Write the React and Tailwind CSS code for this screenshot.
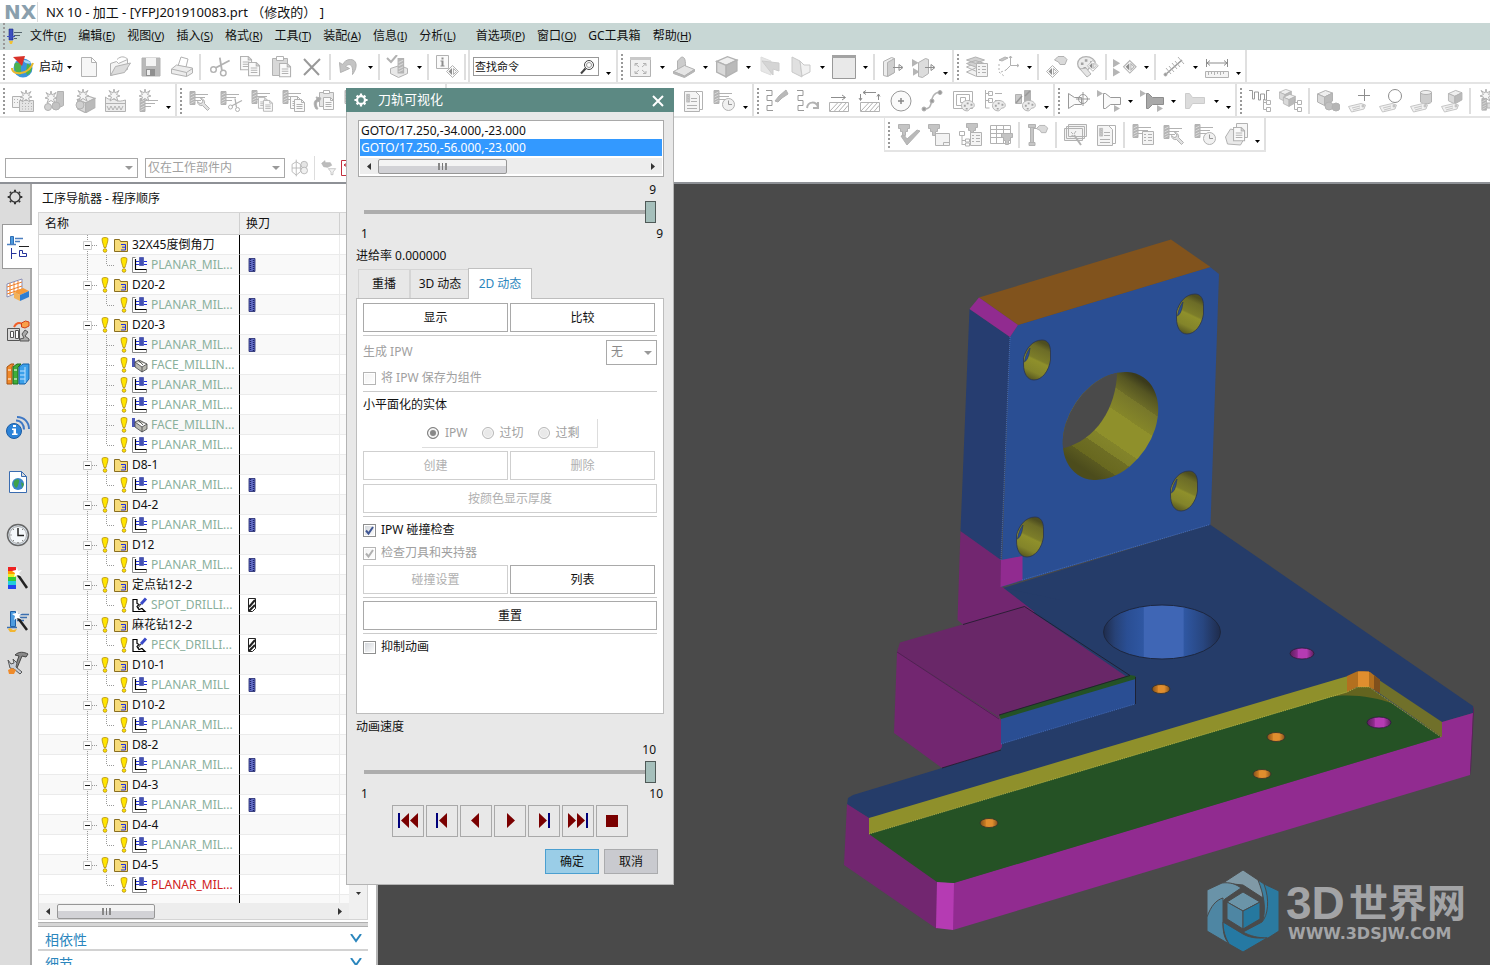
import { Fragment, useState } from 'react';

/* ---------- small icon parts, drawn from their own origin ---------- */

const at = (x, y, node, scale = 1) => (
  <g transform={`translate(${x} ${y}) scale(${scale})`}>{node}</g>
);

const mill = (
  <>
    <path fill="#b5b5b5" d="M1 .5h5v13H1z" />
    <path stroke="#d8d8d8" d="M1.500 4l4-2M1.500 7l4-2M1.500 10l4-2M1.500 12.500l4-2" />
  </>
);
const lines = <path fill="none" d="M0 .5h13M0 3.500h10M0 6.500h6" />;
const star = (
  <path fill="#f6f6f6" d="M6 0l1 4 4-2.500-2.500 4L12 7l-3.500 1L10 12 6 9.500 2 12l1.500-4L0 7l3.500-1.500L1 1.500 5 4z" />
);
const doc = (
  <>
    <path fill="#fafafa" d="M.5.5h7l3 3v9H.5z" />
    <path fill="none" d="M7.500.5v3h3M2.500 5.500h6M2.500 7.500h6M2.500 9.500h6" />
  </>
);
const list = (
  <>
    <path fill="#f4f4f4" d="M.5.5h11v13H.5z" />
    <path fill="none" d="M2 3.500h2M2 6.500h2M2 9.500h2M6 3.500h4M6 6.500h4M6 9.500h4" />
  </>
);
const palette = (
  <>
    <path fill="#ececec" d="M7 .5c4 0 7 2.500 7 5s-2 3-3.500 3S9 11.500 6.500 11.500C3 11.500.5 9 .5 6S3 .5 7 .5z" />
    <path fill="#a3a3a3" stroke="none" d="M3 5h2v2H3zM6 2.500h2v2H6zM10 4h2v2h-2zM5 8.500h2v1.500H5z" />
  </>
);
const clock = (
  <>
    <circle cx="6.500" cy="6.500" r="6" fill="#f1f1f1" />
    <path fill="none" stroke="#999" d="M6.500 2.500v4h3.500" />
  </>
);
const wrench = (
  <path d="M.5 3.500a4 4 0 0 0 5 4l5 5 2-2-5-5a4 4 0 0 0-4-5l2.500 2.500-1 2-2 .5z" />
);
const scissors = (
  <>
    <path fill="none" strokeWidth="1.300" d="M3.500 8L14 2.500M7 .5L8.500 9.500" />
    <circle cx="2.500" cy="9" r="2" fill="#fff" />
    <circle cx="9.500" cy="11.500" r="2" fill="#fff" />
  </>
);
const box = (
  <>
    <path fill="#efefef" d="M.5 4l8-3.500 7 2.500-8 4z" />
    <path fill="#d9d9d9" d="M.5 4l7 3v8.500l-7-3.500z" />
    <path fill="#bababa" d="M7.500 7l8-4v8l-8 4.500z" />
  </>
);
const tree = (
  <path fill="#fff" d="M1.500 0v10.500h3M1.500 3.500h3M4.500 1.500h4v4h-4zM4.500 8.500h4v4h-4z" />
);
const tag = (
  <>
    <path fill="#f1f1f1" stroke="#c6c6c6" d="M.5 6.500L13 3.500l4.500 1.500-1.500 4-12.500 3z" />
    <path fill="none" stroke="#c6c6c6" d="M4 8l8-2M5 10l7-2" />
    <circle cx="15" cy="6" r="1" fill="#fff" />
  </>
);
const holder = (
  <path fill="#c4c4c4" d="M.5.5h11v4h-2v3h-2v4h-3v-4h-2v-3h-2z" />
);
const diamond = (
  <>
    <path fill="#fafafa" d="M6.500.5l6 6-6 6-6-6z" />
    <path fill="#8d8d8d" stroke="none" d="M6 3v7L2.500 6.500z" />
    <path fill="none" d="M7.500 3.500v6l3-3z" />
  </>
);
const flagArrow = <path fill="#b5b5b5" stroke="none" d="M0 0l6 3.500L0 7z" />;
const hand = (
  <path fill="#dadada" d="M.5 4L4 .5h6l3 3-2 5H6L4.500 6z" />
);
const hatch = (
  <path fill="none" d="M.5.5h19v9H.5zM1 9l8-8.500M5 9.500l8-9M9.500 9.500l8-9M14 9.500l5-6" />
);
const cylinder = (
  <>
    <path fill="#cdcdcd" d="M.5 2v10c2 2.500 9 2.500 11 0V2z" />
    <ellipse cx="6" cy="2.500" rx="5.500" ry="2" fill="#eee" />
  </>
);
const snake = <path fill="none" stroke="#999" d="M1 1.500h6v5H2v5h5v5H2v5h6" />;

const ICONS = {
  newFile: <path fill="#f6f6f6" d="M4.500 2.500h10l5 5v14h-15zM14.500 2.500v5h5" />,
  open: (
    <>
      <path fill="#f5f5f5" d="M2.500 20.500V8.500l6-2 2 2 9-4v10z" />
      <path fill="#dcdcdc" d="M2.500 20.500l5-9L22.500 8l-6 9.500z" />
      <path fill="none" d="M9 4.500c4-4 8-3 11 0" />
    </>
  ),
  save: (
    <>
      <path fill="#b9b9b9" d="M3 3h18v18H3z" />
      <path fill="#f4f4f4" stroke="none" d="M7 3h10v8H7z" />
      <path fill="#8f8f8f" stroke="none" d="M7 14h9v7H7z" />
      <path fill="#eee" stroke="none" d="M8 15h3v5H8z" />
    </>
  ),
  print: (
    <>
      <path fill="#fff" d="M8 11l3-9 7 2-2 8z" />
      <path fill="#ececec" d="M1.500 14l5-4 16 3v5l-6 3.500-15-3z" />
      <path fill="none" d="M1.500 14l15 3.500 6-4M16.500 17.500v4" />
    </>
  ),
  cut: at(3, 2, scissors, 1.4),
  copy: (
    <>
      {at(2, 1, doc, 1.1)}
      {at(10, 7, doc, 1.1)}
    </>
  ),
  paste: (
    <>
      <path fill="#d8d8d8" d="M3.500 3.500h15v17h-15z" />
      <path fill="#fff" d="M7.500 1.500h7v4h-7z" />
      {at(10, 8, doc, 1.1)}
    </>
  ),
  remove: <path fill="none" strokeWidth="2" stroke="#999" d="M4 4l15 16M20 4L4 20" />,
  undo: <path fill="#c4c4c4" d="M2.500 7.500l1 10 9-4-4-2c4-4 8-2 7 8 6-8 4-15-2-15-4 0-6 2-8 5z" />,
  verify: (
    <>
      <path fill="none" strokeWidth="2" d="M1 3l4 4 6-7" />
      <path fill="#e8e8e8" d="M4.500 13.500l9-3 8 3v5l-9 4-8-4z" />
      {at(11, 3, mill, 1.1)}
    </>
  ),
  info: (
    <>
      <path fill="#fafafa" d="M1.500.5h12v13h-12z" />
      <path stroke="none" fill="#8d8d8d" d="M6.500 2.500h2v2h-2zM5.500 5.500h3v5h1v1h-4v-1h1v-4h-1z" />
      {at(11, 10, diamond)}
    </>
  ),
  fit: (
    <>
      <path fill="#f1f1f1" d="M1.500 3.500h20v18h-20z" />
      <path fill="#c9c9c9" stroke="none" d="M1 2h21v3H1z" />
      <path fill="none" d="M6 11V8.500h3M6 8.500l4 3.500M17 11V8.500h-3M17 8.500L13 12M6 16v2.500h3M6 18.500l4-3.500M17 16v2.500h-3M17 18.500L13 15" />
    </>
  ),
  section: (
    <>
      <path fill="#ccc" d="M5.500 17V6l4-4c3 0 4 2 4 9z" />
      <path fill="#e5e5e5" d="M1.500 16.500l11-6 10 4-10 6.500z" />
      <path fill="#b9b9b9" d="M1.500 16.500l11 4.500 10-6.500v2l-10 6-11-4z" />
    </>
  ),
  cube: at(1, 1, box, 1.35),
  plane: (
    <>
      <path fill="#e6e6e6" stroke="#ddd" d="M3 2l10 4v14L3 16z" />
      <path fill="#d5d5d5" stroke="#ccc" d="M4 6l17 2v8l-6-2v6z" />
    </>
  ),
  plane2: (
    <>
      <path fill="#e0e0e0" stroke="#c9c9c9" d="M3 2l8 4 2 16-10-5z" />
      <path fill="#f1f1f1" stroke="#c9c9c9" d="M11 6l4 4h6v7l-8 4z" />
    </>
  ),
  frame: (
    <>
      <path fill="#e9e9e9" stroke="#999" d="M.5.5h23v23H.5z" />
      <path fill="#a3a3a3" stroke="none" d="M0 0h24v3H0z" />
    </>
  ),
  exportBox: (
    <>
      <path fill="#ececec" d="M2.500 6.500l8-4 3 1v14l-7 4-4-1z" />
      <path fill="#cfcfcf" d="M6.500 7.500l7-4v14l-7 4z" />
      <path fill="none" stroke="#8d8d8d" d="M12 12.500h9M18 9.500l4 3-4 3z" />
    </>
  ),
  exportBox2: (
    <>
      {at(0, 4, flagArrow, 1.1)}
      {at(1, 13, flagArrow, 1.1)}
      <path fill="#dcdcdc" d="M6.500 7.500l7-4 3 1v14l-6 4-4-1z" />
      <path fill="none" stroke="#8d8d8d" d="M13 12.500h9M19 9.500l4 3-4 3z" />
    </>
  ),
  layers: (
    <>
      <path fill="#f1f1f1" d="M1.500 17l9-4 9 4-9 4zM1.500 12l9-4 9 4-9 4z" />
      <path fill="#d1d1d1" d="M1.500 5l9-3 9 3-9 3.500zM1.500 8.500l9-3 9 3-9 3.500z" />
      {at(11, 8, list)}
    </>
  ),
  csys: (
    <>
      <path fill="#c6c6c6" d="M3 5l6-3 3 1-6 3z" />
      <path fill="none" d="M14.500 1v9.500h8M14.500 10.500l-5 5M13 3l1.500-2L16 3M21 9l2 1.500-2 1.500" />
      <path fill="none" strokeDasharray="2 2" d="M3 9v8l5 4M5 17l5-2" />
    </>
  ),
  handDiamond: (
    <>
      {at(9, 1, hand)}
      {at(1, 10, diamond)}
    </>
  ),
  paletteDiamond: (
    <>
      {at(1, 1, palette, 1.3)}
      {at(11, 5, diamond, 0.9)}
      <path fill="#e5e5e5" d="M4 14l7 8 4-3-5-6z" />
    </>
  ),
  playDiamond: (
    <>
      {at(0, 4, flagArrow, 1.2)}
      {at(0, 13, flagArrow, 1.2)}
      {at(10, 5, diamond, 1.05)}
    </>
  ),
  measure: (
    <>
      <path fill="none" strokeWidth="1.500" stroke="#999" d="M3 20L20 5" />
      <path fill="none" d="M4 13l5 6M7 11l5 6M10 8l5 6M13 6l5 6M16 2l6 7" />
      <circle cx="3.500" cy="19.500" r="1.500" fill="#999" />
    </>
  ),
  ruler: (
    <>
      <path fill="none" stroke="#8d8d8d" d="M1.500 4v8M22.500 4v8M2 8h20M5 5.500L2 8l3 2.500M19 5.500L22 8l-3 2.500" />
      <path fill="#f4f4f4" d="M.5 16.500h23v6H.5z" />
      <path fill="none" d="M3.500 17v3M6.500 17v2M9.500 17v3M12.500 17v2M15.500 17v3M18.500 17v2" />
    </>
  ),
  newProgram: (
    <>
      <path fill="#f3f3f3" d="M1.500 7.500h14v11h-14z" />
      <path fill="#e4e4e4" d="M8.500 11.500h14v11h-14z" />
      <path fill="none" strokeDasharray="1 2" d="M3 10.500h10M3 13.500h5M11 14.500h10M11 17.500h10M11 20h10" />
      {at(9, 1, star)}
    </>
  ),
  newTool: (
    <>
      <path fill="#c4c4c4" d="M15.500 2.500h6v14l-4 2-4-3z" />
      <circle cx="6" cy="18" r="3.500" fill="#d2d2d2" />
      <circle cx="14" cy="17" r="4" fill="#c2c2c2" />
      {at(3, 2, star)}
    </>
  ),
  newGeom: (
    <>
      {at(4, 6, box, 1.15)}
      <circle cx="7" cy="16" r="4" fill="#cfcfcf" />
      {at(4, 0, star)}
    </>
  ),
  newMethod: (
    <>
      <path fill="#ececec" d="M1.500 8c4 4 7 1 10 3s6 1 10 0v11.500h-20z" />
      <path fill="none" d="M2 14.500h20M3 17l2 4 2-4 2 4 2-4 2 4 2-4 2 4 2-4" />
      {at(4, 0, star)}
    </>
  ),
  newOp: (
    <>
      {at(4, 9, mill)}
      {at(10, 11, lines)}
      {at(4, 0, star)}
    </>
  ),
  millWrench: (
    <>
      {at(1, 2, mill)}
      {at(7, 5, lines)}
      {at(9, 9, wrench)}
    </>
  ),
  millCut: (
    <>
      {at(1, 2, mill)}
      {at(7, 5, lines)}
      {at(9, 9, scissors)}
    </>
  ),
  millCopy: (
    <>
      {at(1, 1, mill)}
      {at(7, 4, lines)}
      {at(8, 8, doc, 0.9)}
      {at(13, 11, doc, 0.9)}
    </>
  ),
  millDoc: (
    <>
      {at(1, 1, mill)}
      {at(7, 4, lines)}
      {at(9, 7, doc)}
      {at(13, 10, doc)}
    </>
  ),
  millClip: (
    <>
      <path fill="#e5e5e5" d="M7.500 3.500h14v14h-14z" />
      <path fill="#fff" d="M11.500 1.500h6v3h-6z" />
      {at(11, 8, doc)}
      <path fill="#a9a9a9" d="M4 20c-3-5-2-8 1-10l-1-2 5 1-2 4-1-1c-2 2-2 4 0 8z" />
    </>
  ),
  millList: (
    <>
      {at(1, 1, mill)}
      {at(7, 4, lines)}
      {at(11, 8, list)}
    </>
  ),
  millClock: (
    <>
      {at(1, 1, mill)}
      {at(7, 4, lines)}
      {at(10, 9, clock)}
    </>
  ),
  docMill: (
    <>
      <path fill="#fff" d="M7.500 2.500h14v18h-14z" />
      <path fill="#f5f5f5" d="M3.500 2.500h11l4 4v16h-15z" />
      {at(5, 5, mill, 0.6)}
      <path fill="none" d="M10 9.500h6M10 12.500h6M6 16.500h10M6 19.500h10" />
    </>
  ),
  pathTorch: (
    <>
      {at(0, 0, snake)}
      <path fill="#b9b9b9" d="M10 12l4-5 7-6 2 4-6 4-4 4z" />
    </>
  ),
  pathRotate: (
    <>
      {at(0, 0, snake)}
      <path fill="none" strokeWidth="2" d="M11 19c1-7 9-7 11-1M22 13v6h-5" />
    </>
  ),
  hatchOver: (
    <>
      {at(2, 13, hatch)}
      <path fill="none" stroke="#8d8d8d" d="M4 8.500h14M15 6l3.500 2.500L15 11" />
    </>
  ),
  hatchCorner: (
    <>
      {at(2, 13, hatch)}
      <path fill="none" stroke="#8d8d8d" d="M2.500 5v6M1 9l1.500 2.500L4 9M20.500 11V5M19 7.500L20.500 5 22 7.500M5 3.500h13M8 1.500l-3 2 3 2" />
    </>
  ),
  target: (
    <>
      <circle cx="12" cy="12" r="10" fill="#fafafa" stroke="#999" />
      <path fill="none" stroke="#888" strokeWidth="1.500" d="M12 9v6M9 12h6" />
    </>
  ),
  curve: (
    <>
      <path fill="none" strokeWidth="1.500" d="M3 20c14 1 3-15 17-17" />
      <circle cx="4" cy="20" r="2" fill="#999" />
      <circle cx="12" cy="12" r="2" fill="#999" />
      <circle cx="20" cy="3.500" r="2" fill="#999" />
    </>
  ),
  contourPal: (
    <>
      <path fill="#fff" d="M2.500 2.500h19v17h-19zM5.500 5.500h13v11h-13zM9.500 8.500h5v5h-5z" />
      {at(10, 11, palette, 0.95)}
    </>
  ),
  treePal: (
    <>
      <path fill="#fff" d="M3.500 1v18h4M3.500 4.500h4M3.500 11.500h4M6.500 2.500h4v4h-4zM6.500 9.500h4v4h-4zM13 4.500h7M13 11.500h5" />
      {at(10, 11, palette, 0.95)}
    </>
  ),
  toolPal: (
    <>
      <path fill="#c9c9c9" d="M2.500 5.500h6v9h-6z" />
      <path fill="#b2b2b2" d="M11.500 1.500h6v13h-6z" />
      <path fill="none" stroke="#999" strokeWidth="1.500" d="M3 14l6-7M12 7l5-5" />
      {at(9, 11, palette, 0.95)}
    </>
  ),
  profTarget: (
    <>
      <path fill="#fafafa" stroke="#999" d="M2.500 4.500v15l6-4h7v-7h-7z" />
      <circle cx="17" cy="10" r="4.500" fill="none" stroke="#999" />
      <path fill="none" stroke="#999" d="M17 3v14M10 10h14" />
    </>
  ),
  prof: (
    <>
      {at(0, 1, flagArrow)}
      <path fill="#fafafa" stroke="#999" d="M6.500 4.500h2l5 4h10v7h-10l-5 4h-2z" />
      {at(17, 16, flagArrow)}
    </>
  ),
  profFilled: (
    <>
      {at(0, 1, flagArrow)}
      <path fill="#a9a9a9" stroke="#8d8d8d" d="M6.500 4.500h2l4 4h11v7h-11l-4 4h-2z" />
      {at(17, 16, flagArrow)}
    </>
  ),
  toolBody: <path fill="#dcdcdc" stroke="#ccc" d="M2.500 4.500h4l3 4h12v6h-12l-3 5h-4z" />,
  combTree: (
    <>
      <path fill="none" stroke="#999" d="M1 1.500h3.500V10h2V3h4v8h2V5h4v6h2V1.500h3" />
      {at(14, 10, tree)}
    </>
  ),
  cubeTree: (
    <>
      {at(0, 0, box, 0.8)}
      {at(4, 5, box, 0.8)}
      {at(14, 10, tree)}
    </>
  ),
  binocCube: (
    <>
      {at(1, 1, box)}
      <circle cx="13" cy="17" r="4" fill="#c0c0c0" />
      <circle cx="20" cy="18" r="4" fill="#b5b5b5" />
    </>
  ),
  tagPlus: (
    <>
      {at(1, 11, tag)}
      <path fill="none" stroke="#8d8d8d" d="M17.500 0v12M11 6.500h12" />
    </>
  ),
  tagCircle: (
    <>
      {at(1, 11, tag)}
      <circle cx="17" cy="7" r="6.500" fill="#fff" stroke="#8d8d8d" />
    </>
  ),
  tagCyl: (
    <>
      {at(11, 1, cylinder)}
      {at(1, 11, tag)}
    </>
  ),
  tagHolder: (
    <>
      {at(8, 1, box, 0.9)}
      {at(1, 11, tag)}
    </>
  ),
  starOp: (
    <>
      {at(3, 0, star)}
      {at(4, 9, mill, 0.9)}
      <path fill="#ddd" d="M10 14h10v5H10z" />
    </>
  ),
  holderCheck: (
    <>
      {at(2, 1, holder)}
      <path fill="#b9b9b9" d="M5 13l6 9L24 8l-3-1-10 9-3-4z" />
    </>
  ),
  holderDoc: (
    <>
      <path fill="#f3f3f3" d="M8.500 10.500h14v12h-14zM16.500 19.500h6M16.500 19.500v3" />
      {at(1, 1, holder)}
    </>
  ),
  holderTree: (
    <>
      <path fill="#fff" d="M1.500 8.500h5v4h-5zM4 13v9M4 17.500h3M4 21.500h3M7.500 16h4v3h-4zM7.500 20h4v3h-4z" />
      {at(8, 0, holder)}
      {at(12, 9, list)}
    </>
  ),
  gridHolder: (
    <>
      <path fill="#fff" d="M1.500 2.500h20v18h-20zM1.500 6.500h20M1.500 10.500h20M1.500 14.500h20M7.500 2.500v18M14.500 2.500v18" />
      {at(12, 10, holder)}
    </>
  ),
  flagHand: (
    <>
      <path fill="#c6c6c6" d="M4.500 4.500h3v15h-3zM2.500 1.500h7v3h-7zM3 22.500h6v-3H3z" />
      <path fill="none" d="M8 5.500h4" />
      {at(10, 2, hand, 0.9)}
    </>
  ),
  wand: (
    <>
      <path fill="#f3f3f3" d="M5.500 1.500h18v12h-18zM3.500 3.500h18v12h-18zM1.500 5.500h18v12h-18z" />
      <path fill="none" strokeWidth="2" d="M11 12l7 10" />
      <path fill="none" d="M8 9l2 2M13 8l-2 3M7 14l3-2" />
    </>
  ),
  clipStack: (
    <>
      <path fill="#e9e9e9" d="M1.500 14l5-8 4 1 10 8-4 7-13-1z" />
      <path fill="#f6f6f6" d="M12.500.5h11v14h-11z" />
      {at(9, 4, doc, 1.1)}
    </>
  ),
  geomLink: (
    <>
      <path fill="none" d="M2.500 7.500l5-3 5 3v9l-5 4-5-4zM7.500 2v20M2.500 12h10" />
      <circle cx="17" cy="8" r="4" fill="#e5e5e5" />
      <circle cx="17" cy="15" r="4" fill="#f0f0f0" />
    </>
  ),
  filterHand: (
    <>
      <path fill="#bcbcbc" d="M1 5l5-4v3h8l2 4-6 3-6-1z" />
      <path fill="#f3f3f3" d="M11 13h11l-4 5v4h-3v-4z" />
    </>
  ),
};

const Icon = ({ name, className = 'size-6' }) => (
  <svg viewBox="0 0 24 24" className={`shrink-0 ${className}`} fill="#e2e2e2" stroke="#b2b2b2" aria-hidden="true">
    {ICONS[name]}
  </svg>
);

const GlobeIcon = () => (
  <svg viewBox="0 0 24 24" className="size-6 shrink-0" aria-hidden="true">
    <circle cx="12" cy="13" r="9.500" fill="#3b93dc" />
    <path fill="#4db24a" d="M4 8c4-1 7 1 6 4s2 6-1 8c-5-3-7-8-5-12zM16 8l5 4c0 4-2 7-5 8-2-3 0-7 0-12z" />
    <path fill="#a8dcf5" d="M12 5c4 0 6 1 8 3-3 1-6 1-8-3z" />
    <path fill="none" stroke="#e9b92c" strokeWidth="2" d="M1 13c0 8 17 7 21-5" />
    <path fill="#d8322a" d="M2 2l12-1-3 10z" />
  </svg>
);

/* ---------- toolbars ---------- */

const TOOLBAR_1 = [
  ['newFile', 'open', 'save', 'print', '|', 'cut', 'copy', 'paste', 'remove', '|', 'undo', 'v', '|', 'verify', 'v', '|', 'info', '|'],
  ['fit', 'v', 'section', 'v', 'cube', 'v', 'plane', 'plane2', 'v', 'frame', 'v', '|', 'exportBox', 'exportBox2', 'end'],
  ['layers', 'csys', 'v', '|', 'handDiamond', 'paletteDiamond', '|', 'playDiamond', 'v', '|', 'measure', 'v', 'ruler', 'end'],
];

const TOOLBAR_2 = [
  ['newProgram', 'newTool', 'newGeom', 'newMethod', 'newOp', 'end'],
  ['millWrench', 'millCut', 'millCopy', 'millDoc', 'millClip', 'millList', 'millClock', 'docMill', 'end'],
  ['verify', 'millList', 'millDoc', 'millCopy', 'newOp', '|', 'curve', 'millList', 'docMill', 'millClock', 'end'],
  ['pathTorch', 'pathRotate', 'hatchOver', 'hatchCorner', 'target', 'curve', 'contourPal', 'treePal', 'toolPal', 'end'],
  ['profTarget', 'prof', 'v', 'profFilled', 'v', 'toolBody', 'v', 'end'],
  ['combTree', 'cubeTree', '|', 'binocCube', 'tagPlus', 'tagCircle', 'tagCyl', 'tagHolder', '|', 'starOp', 'newOp'],
];

const TOOLBAR_3 = [
  'holderCheck', 'holderDoc', 'holderTree', 'gridHolder', '|', 'flagHand', '|', 'wand', 'docMill', '|',
  'millList', 'millWrench', 'millClock', 'clipStack', 'end',
];

const Caret = ({ className = 'text-black' }) => (
  <svg viewBox="0 0 5 3" className={`h-[3px] w-[5px] shrink-0 ${className}`} aria-hidden="true">
    <path fill="currentColor" d="M0 0h5L2.500 3z" />
  </svg>
);

const Grip = () => <span className="mr-[2px] ml-[3px] h-[26px] shrink-0 border-l-2 border-dotted border-[#999]" />;

const ToolbarItem = ({ item }) => {
  if (item === '|') return <span className="mx-[2px] h-[26px] w-[2px] shrink-0 bg-[#dedede]" />;
  if (item === 'v') {
    return (
      <button type="button" aria-label="more" className="flex h-full w-3 shrink-0 items-center justify-center">
        <Caret />
      </button>
    );
  }
  if (item === 'end') {
    return (
      <button type="button" aria-label="options" className="flex h-full w-[13px] shrink-0 items-end justify-center pb-[7px]">
        <Caret />
      </button>
    );
  }
  return (
    <button type="button" aria-label={item} className="flex w-[31px] shrink-0 items-center justify-center">
      <Icon name={item} />
    </button>
  );
};

const Toolbar = ({ items, lead }) => (
  <div className="flex h-full shrink-0 items-center border-r-2 border-[#e0e0e0] pt-[2px]">
    <Grip />
    {lead}
    {items.map((item, i) => (
      <ToolbarItem key={i} item={item} />
    ))}
  </div>
);

const MENUS = [
  ['文件', 'F'],
  ['编辑', 'E'],
  ['视图', 'V'],
  ['插入', 'S'],
  ['格式', 'R'],
  ['工具', 'T'],
  ['装配', 'A'],
  ['信息', 'I'],
  ['分析', 'L'],
  ['首选项', 'P'],
  ['窗口', 'O'],
  ['GC工具箱', ''],
  ['帮助', 'H'],
];

const Combo = ({ label, value, width }) => (
  <span className={`relative flex ${width}`}>
    <select
      aria-label={label}
      disabled
      className="h-5 w-full appearance-none border border-[#a8a8a8] bg-white pl-[2px] text-[#a0a0a0] opacity-100"
    >
      <option>{value}</option>
    </select>
    <svg viewBox="0 0 8 4" className="pointer-events-none absolute top-2 right-[5px] h-1 w-2" aria-hidden="true">
      <path fill="#999" d="M0 0h8L4 4z" />
    </svg>
  </span>
);

const Header = () => (
  <header className="shrink-0">
    <div className="flex h-[23px] items-center overflow-hidden bg-white">
      <span className="w-[37px] pl-1 font-['DejaVu_Sans'] text-[20px] leading-[22px] font-bold text-[#8a9fad]">NX</span>
      <span className="h-5 border-l border-[#ddd]" />
      <h1 className="pl-2 text-[13px] leading-5 [text-spacing-trim:space-all]">NX 10 - 加工 - [YFPJ201910083.prt （修改的） ]</h1>
    </div>
    <nav className="flex h-[27px] items-center bg-[#c8d7d5] pb-[2px]">
      <Grip />
      <svg viewBox="0 0 16 16" className="mr-px size-4" aria-hidden="true">
        <path fill="#3d4fc0" stroke="#1b2880" strokeWidth=".6" d="M2 1h4v11H2z" />
        <path stroke="#56666e" d="M7 4.500h8M7 7.500h6M7 10.500h3" />
        <path stroke="#3d4fc0" d="M0 8.500h8" />
        <path fill="#f1c232" d="M2 13h4l-1 3H3z" />
      </svg>
      {MENUS.map(([label, key]) => (
        <button key={label} type="button" className={key === 'P' ? 'ml-2 px-[6px]' : 'px-[6px]'}>
          {label}
          {key && (
            <span className="text-[11px]">
              (<u>{key}</u>)
            </span>
          )}
        </button>
      ))}
    </nav>
    <div className="flex h-[34px] overflow-hidden border-b-2 border-[#e4e4e4] bg-white">
      <Toolbar
        items={TOOLBAR_1[0]}
        lead={
          <button type="button" className="flex w-[66px] items-center gap-1 pl-1">
            <GlobeIcon />
            启动
            <Caret />
          </button>
        }
      />
      <div className="flex items-center border-r-2 border-[#e0e0e0] bg-white pt-px pl-[3px]">
        <label className="flex h-[19px] w-[126px] items-center border border-[#999] bg-white pr-[3px] pl-px">
          <input aria-label="查找命令" defaultValue="查找命令" className="w-0 flex-1 text-[11px] leading-4 outline-none" />
          <svg viewBox="0 0 16 16" className="size-4" fill="none" stroke="#444" aria-hidden="true">
            <circle cx="10" cy="6" r="4.500" />
            <circle cx="10" cy="6" r="2.500" stroke="#999" />
            <path strokeWidth="2" d="M6.500 9.500L2 14.500" />
          </svg>
        </label>
        <span className="flex h-full pr-px pl-[3px]">
          <ToolbarItem item="end" />
        </span>
      </div>
      <Toolbar items={TOOLBAR_1[1]} />
      <Toolbar items={TOOLBAR_1[2]} />
    </div>
    <div className="flex h-[34px] overflow-hidden border-b-2 border-[#e4e4e4] bg-white">
      {TOOLBAR_2.map((items, i) => (
        <Toolbar key={i} items={items} />
      ))}
    </div>
    <div className="flex h-[34px] bg-white pl-[884px]">
      <div className="flex h-full border-b-2 border-l border-[#e4e4e4]">
        <Toolbar items={TOOLBAR_3} />
      </div>
    </div>
    <div className="flex h-8 items-center gap-[7px] border-b-2 border-[#8e9196] bg-white pt-[2px] pl-[5px]">
      <Combo label="类型过滤器" value="" width="w-[133px]" />
      <Combo label="选择范围" value="仅在工作部件内" width="w-[140px]" />
      <div className="-ml-[2px] flex items-center gap-1">
        <Icon name="geomLink" className="size-5" />
        <span className="h-6 border-l border-[#ddd]" />
        <Icon name="filterHand" className="ml-[2px] size-4" />
        <svg viewBox="0 0 16 16" className="size-4" fill="none" stroke="#c22f3d" aria-hidden="true">
          <path d="M.5.5h15v15H.5zM3 5h6M3 5l3-2M3 5l3 2" />
        </svg>
      </div>
    </div>
  </header>
);

/* ---------- resource bar ---------- */

const RAIL = [
  {
    name: '装配导航器',
    height: 'h-[42px]',
    art: (
      <>
        <path fill="#fff" stroke="#8b8fb5" d="M1 6l15-5v12L1 19z" />
        <path fill="none" stroke="#f07f2a" d="M4 5v12M8 4v12M12 3v11M1 9l15-5M1 13l15-5M1 16l15-5" />
        <path fill="#f59b3a" d="M8 14l9-4 6 3-9 4z" />
        <path fill="#2f7dd0" d="M14 17l9-4v6l-9 4z" />
        <path fill="#f3b25a" d="M8 14l6 3v6l-6-3z" />
      </>
    ),
  },
  {
    name: '机床导航器',
    height: 'h-[42px]',
    art: (
      <>
        <path fill="#d8d8d8" stroke="#555" d="M1.500 8.500h12v12h-12z" />
        <path fill="#fff" stroke="#555" d="M4.500 11.500h3v6h-3zM9.500 10.500h3v8h-3z" />
        <path fill="none" stroke="#f0602a" strokeWidth="2" d="M8 7c2-4 5-5 8-3" />
        <path fill="#f9a04a" stroke="#d2401a" d="M15.500 3l4-2 3.500 1v4l-4 2-3.500-1z" />
        <path fill="#aaa" stroke="#555" d="M14 21h9v-2l-4-3 3-4-3-2-3 4 2 4-4 1z" />
      </>
    ),
  },
  {
    name: '加工特征导航器',
    height: 'h-[42px]',
    art: (
      <>
        <path fill="#f08a2c" stroke="#a85210" d="M1 5l4-3h3L6 5v17H1z" />
        <path fill="#3fae3a" stroke="#1f6e1c" d="M7 5l4-3h4l-3 3v17H7z" />
        <path fill="#3aa0ea" stroke="#1560a8" d="M13 5l4-3h6v15l-4 5h-6z" />
        <path stroke="#fff" d="M2 8h3M2 17h3M8 8h3M8 17h3" />
        <path fill="none" stroke="#bfe2ff" d="M14 9h5M14 13h5M14 17h5M19 5v16" />
      </>
    ),
  },
  {
    name: 'HD3D 工具',
    height: 'h-[66px]',
    art: (
      <>
        <circle cx="8" cy="15" r="7.500" fill="#2c83d8" stroke="#1b5ca3" />
        <path fill="#fff" d="M7 9h3v2H7zM6 12.500h4v5h1.500V19H6v-1.500h1.500V14H6z" />
        <path fill="none" stroke="#3f78c4" strokeWidth="2" d="M10 4.500c5 0 8 4 8 9M11 1c7 0 12 5 12 12" />
      </>
    ),
  },
  {
    name: 'Internet Explorer',
    height: 'h-[42px]',
    art: (
      <>
        <path fill="#fff" stroke="#3a6cb0" d="M3.500 1.500h12l5 5v16h-17zM15.500 1.500v5h5" />
        <circle cx="12" cy="14" r="6" fill="#3b86c9" />
        <path fill="#3fa14a" d="M8 11c3-3 6-2 5 1s-1 5-3 6c-2-2-3-4-2-7zM15 12l3 2-2 4z" />
      </>
    ),
  },
  {
    name: '历史记录',
    height: 'h-[64px]',
    art: (
      <>
        <circle cx="12" cy="12" r="10.500" fill="#dbe6f0" stroke="#666" strokeWidth="1.500" />
        <circle cx="12" cy="12" r="8.500" fill="#f4f8fb" stroke="#aaa" />
        <path fill="none" stroke="#222" strokeWidth="1.500" d="M12 5v7.500h6" />
        <path stroke="#555" d="M12 19v1M4.500 12h1M7 6l.7.7M7 18l.7-.7M17 18l-.7-.7M17 6l-.7.7" />
      </>
    ),
  },
  {
    name: '系统材料',
    height: 'h-[22px]',
    art: (
      <>
        <path fill="#e22" d="M2 1h8v4H2z" />
        <path fill="#f90" d="M2 5h8v3H2z" />
        <path fill="#ee2" d="M2 8h8v3H2z" />
        <path fill="#3c3" d="M2 11h8v4H2z" />
        <path fill="#2cd" d="M2 15h8v4H2z" />
        <path fill="#24e" d="M2 19h8v4H2z" />
        <path fill="none" stroke="#222" strokeWidth="2.500" d="M12 9l9 13" />
        <path fill="#fff" d="M11 1l1 4 4-1-3 3 2 3-4-1-3 2 1-4-3-2 4-1z" />
      </>
    ),
  },
  {
    name: '加工向导',
    height: 'h-[64px]',
    art: (
      <>
        <path fill="#4d9bdf" stroke="#1f5fa5" d="M4.500 2.500h5v15h-5z" />
        <path stroke="#3b6fb0" strokeWidth="1.500" d="M11 5.500h12M11 8.500h10M11 11.500h7M1 18.500h10" />
        <path fill="#f2b632" d="M2 20l2-1 3 2 4-1-2 3H4z" />
        <path fill="none" stroke="#222" strokeWidth="2.500" d="M12 9l9 12" />
        <path fill="#fff" d="M11 1l1 4 4-1-3 3 2 3-4-1-3 2 1-4-3-2 4-1z" />
      </>
    ),
  },
  {
    name: '工具',
    height: 'h-[20px]',
    art: (
      <>
        <path fill="#888" stroke="#444" d="M9 4c4-4 9-3 13-1l-2 3-4-1-5 12-2-1 4-11z" />
        <path fill="#c7cdd6" stroke="#555" d="M2 9l3 4 3-1-1-4 4 4-1 4 6 5-2 2-6-5-4-1z" />
        <path fill="#ef8b2b" d="M2 19l4-2 4 2-2 4H3z" />
      </>
    ),
  },
];

const ResourceBar = () => (
  <aside className="flex w-8 shrink-0 flex-col border-r-2 border-[#aaa] bg-[#dcdcdc]">
    <button type="button" aria-label="资源条选项" className="flex h-[40px] items-start justify-center pt-1">
      <svg viewBox="0 0 16 16" className="size-[18px]" fill="none" stroke="#333" aria-hidden="true">
        <circle cx="8" cy="8" r="4.500" strokeWidth="1.200" />
        <path strokeWidth="1.800" d="M8 1.500v2M8 12.500v2M1.500 8h2M12.500 8h2M3.500 3.500l1 1M11.500 11.500l1 1M3.500 12.500l1-1M11.500 4.500l1-1" />
      </svg>
    </button>
    <button
      type="button"
      aria-label="工序导航器"
      className="-mr-[2px] ml-[2px] flex h-[45px] shrink-0 items-center justify-center border border-r-0 border-[#999] bg-white"
    >
      <svg viewBox="0 0 24 24" className="size-6" fill="none" aria-hidden="true">
        <path fill="#4d9bdf" stroke="#2f6fb5" d="M4.500 1.500h3v8h-3z" />
        <path stroke="#4d7fc0" strokeWidth="1.300" d="M1 9.500h9M9 3.500h8M9 6.500h5" />
        <path stroke="#222" d="M13 11.500h10" />
        <path stroke="#25339b" d="M5.500 13v11M5.500 18.500h5M13.500 15.500h3v3h4v3h-7z" />
      </svg>
    </button>
    {RAIL.map(({ name, height, art }) => (
      <button key={name} type="button" aria-label={name} className={`flex shrink-0 items-center justify-center pl-[5px] ${height}`}>
        <svg viewBox="0 0 24 24" className="size-6 shrink-0" aria-hidden="true">
          {art}
        </svg>
      </button>
    ))}
  </aside>
);

/* ---------- operation navigator ---------- */

const TREE = [
  { name: '32X45度倒角刀', ops: [['PLANAR_MIL...', 'mill']] },
  { name: 'D20-2', ops: [['PLANAR_MIL...', 'mill']] },
  {
    name: 'D20-3',
    ops: [
      ['PLANAR_MIL...', 'mill'],
      ['FACE_MILLIN...'],
      ['PLANAR_MIL...'],
      ['PLANAR_MIL...'],
      ['FACE_MILLIN...'],
      ['PLANAR_MIL...'],
    ],
  },
  { name: 'D8-1', ops: [['PLANAR_MIL...', 'mill']] },
  { name: 'D4-2', ops: [['PLANAR_MIL...', 'mill']] },
  { name: 'D12', ops: [['PLANAR_MIL...', 'mill']] },
  { name: '定点钻12-2', ops: [['SPOT_DRILLI...', 'drill']] },
  { name: '麻花钻12-2', ops: [['PECK_DRILLI...', 'drill']] },
  { name: 'D10-1', ops: [['PLANAR_MILL', 'mill']] },
  { name: 'D10-2', ops: [['PLANAR_MIL...']] },
  { name: 'D8-2', ops: [['PLANAR_MIL...', 'mill']] },
  { name: 'D4-3', ops: [['PLANAR_MIL...', 'mill']] },
  { name: 'D4-4', ops: [['PLANAR_MIL...']] },
  { name: 'D4-5', ops: [['PLANAR_MIL...', null, true]] },
];

const bang = (x) => (
  <g transform={`translate(${x} 2)`}>
    <path fill="#ffe400" stroke="#b08d10" strokeWidth=".8" d="M1 1.500C2 .2 6 .2 7 1.500 7 5 5.500 8 5 10.500H3C2.500 8 1 5 1 1.500z" />
    <circle cx="4" cy="13.500" r="1.800" fill="#ffe400" stroke="#b08d10" strokeWidth=".8" />
  </g>
);

const opArt = (name) => {
  if (name.startsWith('FACE')) {
    return (
      <>
        <path fill="#4b57b8" d="M0 1h3v9H0z" />
        <path fill="#b9b9b2" stroke="#444" strokeWidth=".8" d="M3 5l4-2 8 4v5l-5 3-7-5zM3 5l7 5 5-3M10 10v5M6 3l5 5" />
      </>
    );
  }
  if (name.includes('DRILL')) {
    return (
      <>
        <path fill="#fff" stroke="#000" strokeWidth="1.200" d="M5 2.500H1v12h12l-3-3-3 1-2-3 2-2-2-1z" />
        <path stroke="#3a4ac8" strokeWidth="3" d="M14 1.500L9 7" />
        <path stroke="#222" d="M9 7l-3 4" />
      </>
    );
  }
  return (
    <>
      <path fill="#fff" stroke="#888" d="M3.500.5h-3v15h14v-3" />
      <path fill="none" stroke="#000" strokeWidth="1.200" d="M3.500 2v10.500h11" />
      <path fill="#4450b4" stroke="#2b3a9e" strokeWidth=".6" d="M7.500.5h4v8h-4z" />
      <path stroke="#2030e0" d="M4 4.500h3M12 4.500h3M4 7.500h3M12 7.500h3" />
    </>
  );
};

const FolderGuide = ({ last }) => (
  <svg viewBox="0 0 93 20" className="h-5 w-[93px] shrink-0" fill="none" aria-hidden="true">
    <path stroke="#999" strokeDasharray="1 1" d={`M48.500 0v${last ? 10 : 20}M53 10.500h5`} />
    <path fill="#fff" stroke="#ccc" d="M44.500 6.500h8v8h-8z" />
    <path stroke="#222" d="M46 10.500h5" />
    {bang(62)}
    <path fill="#f7dc7a" stroke="#8a6f20" d="M75.500 4.500h5l1 2h7v10h-13z" />
    <path stroke="#2030e0" d="M82 9.500h4.500v5.500H82M83 12.200h3" />
  </svg>
);

const OpGuide = ({ name, lastChild, lastGroup }) => (
  <svg viewBox="0 0 112 20" className="h-5 w-[112px] shrink-0" fill="none" aria-hidden="true">
    <path
      stroke="#999"
      strokeDasharray="1 1"
      d={`${lastGroup ? '' : 'M48.500 0v20'}M67.500 0v${lastChild ? 10 : 20}M68 10.500h8`}
    />
    {bang(81)}
    <g transform="translate(93 2)">{opArt(name)}</g>
  </svg>
);

const ToolChange = ({ kind }) => (
  <svg viewBox="0 0 8 14" className="ml-2 h-[14px] w-2" aria-hidden="true">
    {kind === 'mill' ? (
      <>
        <path fill="#6670c8" stroke="#20266a" strokeWidth=".8" d="M1 .5h6v13H1z" />
        <path stroke="#1c2268" strokeWidth="1.500" strokeDasharray="1 1" d="M2.500 1v12M5.500 2v11" />
      </>
    ) : (
      <>
        <path fill="#fff" stroke="#222" d="M.5.5h7v10l-3 3h-4z" />
        <path stroke="#222" strokeWidth="2" d="M1 9l6-7M1 13l6-6" />
      </>
    )}
  </svg>
);

const ScrollBar = ({ thumb }) => (
  <div className="flex h-4 items-center bg-[#ededed]">
    <button type="button" aria-label="向左滚动" className="flex w-[18px] justify-center">
      <svg viewBox="0 0 4 7" className="h-[7px] w-1" aria-hidden="true">
        <path d="M4 0v7L0 3.500z" fill="#333" />
      </svg>
    </button>
    <span
      className={`flex h-[15px] items-center justify-center gap-[2px] rounded-xs border border-[#979797] bg-linear-to-b from-[#f4f4f4] from-50% to-[#d2d2d6] to-50% ${thumb}`}
    >
      <span className="h-[7px] w-[2px] bg-[#888]" />
      <span className="h-[7px] w-px bg-[#777]" />
      <span className="h-[7px] w-[2px] bg-[#888]" />
    </span>
    <button type="button" aria-label="向右滚动" className="ml-auto flex w-[18px] justify-center">
      <svg viewBox="0 0 4 7" className="h-[7px] w-1" aria-hidden="true">
        <path d="M0 0v7l4-3.500z" fill="#333" />
      </svg>
    </button>
  </div>
);

const SectionHead = ({ title }) => (
  <button
    type="button"
    className="flex h-6 w-full shrink-0 items-center justify-between border-b-2 border-[#d2d2d2] pt-1 pr-[6px] pl-[7px] text-sm leading-[18px] text-[#2b86bd]"
  >
    {title}
    <svg viewBox="0 0 12 9" className="mb-1 h-[9px] w-3" fill="none" stroke="#2b86bd" strokeWidth="2" aria-hidden="true">
      <path d="M1 0l5 7 5-7" />
    </svg>
  </button>
);

const Navigator = () => (
  <section className="flex w-[346px] shrink-0 flex-col border-r-2 border-[#b5b5b5] bg-white pr-2 pl-[6px]">
    <h2 className="h-7 shrink-0 pt-px pl-1 leading-7">工序导航器 - 程序顺序</h2>
    <div className="flex shrink-0 border border-[#d5d5d5]">
      <div className="min-w-0 flex-1">
        <table className="w-full table-fixed border-separate border-spacing-0">
          <thead>
            <tr className="bg-[#efefef] text-left leading-5">
              <th className="h-[22px] w-[201px] border-r border-b border-[#d0d0d0] p-0 pl-[6px] font-normal">名称</th>
              <th className="w-[100px] border-r border-b border-[#d0d0d0] p-0 pl-[6px] font-normal">换刀</th>
              <th className="border-b border-[#d0d0d0] p-0" />
            </tr>
          </thead>
          <tbody>
            {TREE.map((group, g) => (
              <Fragment key={group.name}>
                <tr className="even:bg-[#f9f9f9]">
                  <td className="h-5 border-r border-b border-r-black border-b-[#ebebeb] p-0">
                    <div className="-mb-px flex items-center leading-5">
                      <FolderGuide last={g === TREE.length - 1} />
                      {group.name}
                    </div>
                  </td>
                  <td className="border-r border-b border-[#ebebeb] p-0" />
                  <td className="border-b border-[#ebebeb] p-0" />
                </tr>
                {group.ops.map(([name, tool, current], i) => (
                  <tr key={i} className="even:bg-[#f9f9f9]">
                    <td className="h-5 border-r border-b border-r-black border-b-[#ebebeb] p-0">
                      <div
                        className={`-mb-px flex items-center leading-5 whitespace-nowrap ${current ? 'text-[#cf2020]' : 'text-[#8ab09c]'}`}
                      >
                        <OpGuide name={name} lastChild={i === group.ops.length - 1} lastGroup={g === TREE.length - 1} />
                        {name}
                      </div>
                    </td>
                    <td className="border-r border-b border-[#ebebeb] p-0">{tool && <ToolChange kind={tool} />}</td>
                    <td className="border-b border-[#ebebeb] p-0" />
                  </tr>
                ))}
              </Fragment>
            ))}
            <tr className="bg-[#f9f9f9]">
              <td className="h-2 border-r border-black p-0" />
              <td className="border-r border-[#ebebeb] p-0" />
              <td className="p-0" />
            </tr>
          </tbody>
        </table>
        <ScrollBar thumb="w-[98px]" />
      </div>
      <div className="flex w-[18px] flex-col justify-end bg-[#f0f0f0] pb-6">
        <span className="flex justify-center">
          <Caret className="text-[#333]" />
        </span>
      </div>
    </div>
    <div className="mt-[2px] h-[5px] shrink-0 border-y border-[#b0b0b0] bg-[#d6d6d6]" />
    <SectionHead title="相依性" />
    <SectionHead title="细节" />
  </section>
);

/* ---------- tool path dialog ---------- */

const Check = ({ label, checked, disabled }) => (
  <label className={`flex items-center gap-[5px] leading-5 ${disabled ? 'text-[#a0a0a0]' : ''}`}>
    <span className="relative flex">
      <input
        type="checkbox"
        defaultChecked={checked}
        disabled={disabled}
        className="peer size-[13px] appearance-none border border-[#8e8f8f] bg-linear-to-br from-[#cfd3d8] to-white shadow-[inset_0_0_0_1px_#fff] disabled:border-[#b5b5b5] disabled:from-[#f3f3f3]"
      />
      <svg
        viewBox="0 0 13 13"
        className="pointer-events-none absolute inset-0 hidden size-[13px] peer-checked:block"
        fill="none"
        stroke={disabled ? '#b0b0b0' : '#3f5693'}
        strokeWidth="2"
        aria-hidden="true"
      >
        <path d="M3 6.500L5.500 9.500 10 3" />
      </svg>
    </span>
    {label}
  </label>
);

const Radio = ({ label, checked }) => (
  <label className="flex items-center gap-[6px] leading-5 text-[#a0a0a0]">
    <input
      type="radio"
      name="facet"
      disabled
      defaultChecked={checked}
      className="size-3 appearance-none rounded-full border border-[#b8b8b8] bg-[#e9e9e9] shadow-[inset_0_0_0_1px_#f8f8f8] checked:border-[#808080] checked:bg-[#888] checked:shadow-[inset_0_0_0_2px_#f4f4f4]"
    />
    {label}
  </label>
);

const FlatButton = ({ children, disabled, wide }) => (
  <button
    type="button"
    disabled={disabled}
    className={`h-[29px] border border-[#a9a9a9] bg-white disabled:border-[#cfcfcf] disabled:text-[#b0b0b0] ${wide ? 'w-full' : 'w-[145px]'}`}
  >
    {children}
  </button>
);

const Rule = () => <hr className="my-[3px] border-t border-[#cbcbcb]" />;

const Slider = ({ label, max }) => {
  const [value, setValue] = useState(max);
  return (
    <div className="pr-px pl-2">
      <output className="mr-[7px] flex h-5 items-center justify-end">{value}</output>
      <input
        type="range"
        aria-label={label}
        min="1"
        max={max}
        value={value}
        onChange={(e) => setValue(e.target.value)}
        className="block h-6 w-[292px] appearance-none bg-transparent [&::-webkit-slider-runnable-track]:h-[22px] [&::-webkit-slider-runnable-track]:bg-[linear-gradient(transparent_9px,#adadad_9px,#adadad_13px,transparent_13px)] [&::-webkit-slider-thumb]:h-[22px] [&::-webkit-slider-thumb]:w-[11px] [&::-webkit-slider-thumb]:appearance-none [&::-webkit-slider-thumb]:border [&::-webkit-slider-thumb]:border-[#4f5957] [&::-webkit-slider-thumb]:bg-[#a5bfbb]"
      />
      <div className="-ml-[3px] flex h-5 items-center justify-between">
        <span>1</span>
        <span>{max}</span>
      </div>
    </div>
  );
};

const PLAYBACK = [
  ['回到起点', <><path fill="#00007a" d="M6 8h2v15H6z" /><path fill="#7a0000" d="M17 8v15l-8-7.500zM26 8v15l-8-7.500z" /></>],
  ['上一个操作', <><path fill="#00007a" d="M10 8h2v15h-2z" /><path fill="#7a0000" d="M21 8v15l-8-7.500z" /></>],
  ['反向播放', <path fill="#7a0000" d="M19 8v15l-8-7.500z" />],
  ['播放', <path fill="#7a0000" d="M13 8v15l8-7.500z" />],
  ['下一个操作', <><path fill="#7a0000" d="M11 8v15l8-7.500z" /><path fill="#00007a" d="M20 8h2v15h-2z" /></>],
  ['到终点', <><path fill="#7a0000" d="M6 8v15l8-7.500zM15 8v15l8-7.500z" /><path fill="#00007a" d="M24 8h2v15h-2z" /></>],
  ['停止', <path fill="#7a0000" d="M10 10h12v12H10z" />],
];

const TABS = [
  ['重播', 'w-[52px]'],
  ['3D 动态', 'w-[60px]'],
  ['2D 动态', 'w-[64px]'],
];

const Dialog = () => {
  const [tab, setTab] = useState('2D 动态');

  return (
    <div
      role="dialog"
      aria-label="刀轨可视化"
      className="absolute top-[88px] left-[346px] w-[328px] border border-t-0 border-[#b4b4b4] bg-[#e8e8e8]"
    >
      <div className="-mx-px flex h-6 items-center bg-[#5c8983] pr-[10px] pl-2 text-white">
        <svg viewBox="0 0 16 16" className="size-[14px]" fill="none" stroke="#fff" aria-hidden="true">
          <circle cx="8" cy="8" r="4.500" strokeWidth="2.500" />
          <path strokeWidth="2.500" d="M8 .5v3M8 12.500v3M.5 8h3M12.500 8h3M3 3l1.500 1.500M11.500 11.500L13 13M3 13l1.500-1.500M11.500 4.500L13 3" />
        </svg>
        <span className="ml-[10px] text-[13px]">刀轨可视化</span>
        <button type="button" aria-label="关闭" className="mt-[2px] ml-auto">
          <svg viewBox="0 0 12 12" className="size-3" stroke="#fff" strokeWidth="2" aria-hidden="true">
            <path d="M1 1l10 10M11 1L1 11" />
          </svg>
        </button>
      </div>

      <div className="pt-2 pr-[9px] pb-[10px] pl-[9px]">
        <div className="ml-[2px] border border-[#a9a9a9] bg-white p-px leading-[17px]">
          <ul>
            <li className="px-px">GOTO/17.250,-34.000,-23.000</li>
            <li className="bg-[#3399ff] px-px text-white">GOTO/17.250,-56.000,-23.000</li>
          </ul>
          <div className="pt-[2px] pb-px">
            <ScrollBar thumb="w-[129px]" />
          </div>
        </div>

        <div className="pt-[3px]">
          <Slider label="刀轨位置" max={9} />
        </div>
        <p className="pt-[2px] leading-5">进给率 0.000000</p>

        <div role="tablist" className="mt-[2px] ml-[2px] flex items-end">
          {TABS.map(([name, width]) => (
            <button
              key={name}
              type="button"
              role="tab"
              aria-selected={tab === name}
              onClick={() => setTab(name)}
              className={`border border-b-0 ${width} ${
                tab === name
                  ? 'relative -mb-px -ml-[2px] h-[31px] border-[#c0c0c0] bg-white text-[#2b86bd]'
                  : 'h-[29px] border-[#d5d5d5]'
              }`}
            >
              {name}
            </button>
          ))}
        </div>

        <div className="h-[416px] border border-[#bdbdbd] bg-white px-[6px] pt-1">
          <div className="flex gap-[2px]">
            <FlatButton>显示</FlatButton>
            <FlatButton>比较</FlatButton>
          </div>
          <Rule />
          <div className="flex h-[26px] items-center justify-between text-[#a0a0a0]">
            <label htmlFor="ipw">生成 IPW</label>
            <span className="relative flex">
              <select
                id="ipw"
                disabled
                className="h-[25px] w-[51px] appearance-none border border-[#a9a9a9] bg-white pl-1 text-[#8a8a8a] opacity-100"
              >
                <option>无</option>
              </select>
              <svg viewBox="0 0 8 4" className="pointer-events-none absolute top-[11px] right-[5px] h-1 w-2" aria-hidden="true">
                <path fill="#999" d="M0 0h8L4 4z" />
              </svg>
            </span>
          </div>
          <div className="pt-[3px]">
            <Check label="将 IPW 保存为组件" disabled />
          </div>
          <Rule />
          <p className="leading-5">小平面化的实体</p>
          <div className="mt-1 ml-[59px] flex h-[29px] w-[176px] items-center gap-[14px] border-r border-b border-[#ddd] pl-[5px]">
            <Radio label="IPW" checked />
            <Radio label="过切" />
            <Radio label="过剩" />
          </div>
          <div className="mt-[3px] flex gap-[2px]">
            <FlatButton disabled>创建</FlatButton>
            <FlatButton disabled>删除</FlatButton>
          </div>
          <div className="mt-1 flex">
            <FlatButton disabled wide>
              按颜色显示厚度
            </FlatButton>
          </div>
          <Rule />
          <div className="flex flex-col gap-[3px]">
            <Check label="IPW 碰撞检查" checked />
            <Check label="检查刀具和夹持器" checked disabled />
          </div>
          <div className="mt-[2px] flex gap-[2px]">
            <FlatButton disabled>碰撞设置</FlatButton>
            <FlatButton>列表</FlatButton>
          </div>
          <Rule />
          <div className="flex">
            <FlatButton wide>重置</FlatButton>
          </div>
          <Rule />
          <Check label="抑制动画" />
        </div>

        <p className="pt-[3px] leading-5">动画速度</p>
        <div className="pt-[3px]">
          <Slider label="动画速度" max={10} />
        </div>
        <div className="mt-px flex justify-center gap-[2px]">
          {PLAYBACK.map(([name, art]) => (
            <button key={name} type="button" aria-label={name} className="size-8 border border-[#a9a9a9]">
              <svg viewBox="1 1 30 30" className="size-[30px]" aria-hidden="true">
                {art}
              </svg>
            </button>
          ))}
        </div>
        <div className="mt-3 flex justify-end gap-[5px] pr-[6px]">
          <button type="button" className="h-[25px] w-[54px] border border-[#4b9fd0] bg-[#9acde7]">
            确定
          </button>
          <button type="button" className="h-[25px] w-[54px] border border-[#aaabad] bg-[#c9cacf]">
            取消
          </button>
        </div>
      </div>
    </div>
  );
};

/* ---------- graphics window ---------- */

const BOLT_HOLES = [
  [1190, 314],
  [1037, 360],
  [1184, 491],
  [1030, 537],
];
const PIN_HOLES = [
  [1161, 689],
  [1276, 737],
  [1262, 774],
  [989, 823],
];

const Viewport = () => (
  <main className="min-w-0 flex-1 bg-[#4a4a4a]">
    <svg viewBox="378 184 1112 781" preserveAspectRatio="xMaxYMid meet" className="block size-full">
      <defs>
        <linearGradient id="bore" gradientUnits="userSpaceOnUse" x1="1082" y1="468" x2="1142" y2="380">
          <stop offset="0" stopColor="#4c4c1c" />
          <stop offset=".12" stopColor="#5a5a20" />
          <stop offset=".12" stopColor="#68681f" />
          <stop offset=".26" stopColor="#6e6e24" />
          <stop offset=".26" stopColor="#7f8028" />
          <stop offset=".36" stopColor="#83842a" />
          <stop offset=".36" stopColor="#8f902b" />
          <stop offset=".62" stopColor="#8f902b" />
          <stop offset=".62" stopColor="#858629" />
          <stop offset=".8" stopColor="#77772a" />
          <stop offset=".8" stopColor="#6c6c27" />
          <stop offset=".92" stopColor="#555522" />
          <stop offset="1" stopColor="#3a3a1c" />
        </linearGradient>
        <linearGradient id="bolt" gradientUnits="userSpaceOnUse" x1="-8" y1="18" x2="8" y2="-16">
          <stop offset="0" stopColor="#5a5a20" />
          <stop offset=".2" stopColor="#83842a" />
          <stop offset=".5" stopColor="#8f902b" />
          <stop offset=".55" stopColor="#7c7d29" />
          <stop offset=".85" stopColor="#6c6c27" />
          <stop offset="1" stopColor="#4e4e20" />
        </linearGradient>
        <linearGradient id="well">
          <stop offset="0" stopColor="#1f2c4c" />
          <stop offset=".1" stopColor="#274277" />
          <stop offset=".2" stopColor="#2a4e93" />
          <stop offset=".34" stopColor="#2f57a2" />
          <stop offset=".35" stopColor="#3f66b5" />
          <stop offset=".68" stopColor="#3f66b5" />
          <stop offset=".69" stopColor="#2f57a2" />
          <stop offset=".85" stopColor="#284680" />
          <stop offset="1" stopColor="#1f2c4c" />
        </linearGradient>
        <linearGradient id="pin">
          <stop offset="0" stopColor="#80501c" />
          <stop offset=".3" stopColor="#c87a22" />
          <stop offset=".35" stopColor="#e08e2e" />
          <stop offset=".68" stopColor="#e08e2e" />
          <stop offset="1" stopColor="#80501c" />
        </linearGradient>
        <linearGradient id="dowel">
          <stop offset="0" stopColor="#5c1f5b" />
          <stop offset=".3" stopColor="#912b90" />
          <stop offset=".35" stopColor="#b53bb3" />
          <stop offset=".7" stopColor="#b53bb3" />
          <stop offset="1" stopColor="#5c1f5b" />
        </linearGradient>
        <clipPath id="boreClip">
          <ellipse cx="1110.500" cy="426" rx="58.700" ry="41.800" transform="rotate(-56 1110.500 426)" />
        </clipPath>
      </defs>

      {/* base plate */}
      <path fill="#253c69" d="M1003 588L1210 524.500 1473 706V713L1442 722 869 818 847 805 848 798 853 795 942 768 1001 750 1001 700z" />
      <path fill="#912b90" d="M953 883L1441 737 1442 722 1473 713 1470 775 953 930z" />
      <path fill="#5c1f5b" d="M1473 706v7l-3 62 1-5 3-60z" />
      <path fill="#722670" d="M847 804L869 818V834L938 882 937 929 844 865z" />
      <path fill="#b53bb3" d="M937 881L954 883 953 930 936 928z" />
      <path fill="#63641f" d="M1330 697L1358 687H1369L1441 737 1391 706z" />
      <path fill="#255225" d="M869 834L1328 697C1350 693 1375 697 1391 703L1441 737 954 883 937 882z" />
      <path fill="#8f902b" d="M869 818L1348 676V692L869 834z" />
      <path fill="#70702a" d="M1379 680L1442 722V737L1379 693z" />
      <path fill="#b3701f" d="M1347 676L1357 671.500C1360 671 1366 671 1370 672L1380 680V693L1369 687H1357L1347 692z" />
      <path fill="#e08e2e" d="M1358 671.500H1369V687H1358z" />
      <path fill="#80501c" d="M1374 675L1380 680V693L1374 690z" />
      <path fill="none" stroke="#b9ba4a" strokeDasharray="1 1" strokeWidth=".8" d="M869 834L1347 692 1358 687H1369L1441 737" />

      {/* upright */}
      <path fill="#722670" d="M960.500 531L1001 559V586L1035 612 963 624.500 957.500 620z" />
      <path fill="#253c69" d="M1005 588L1060 600 1060 628 1035 612z" />
      <path fill="#263d70" d="M969.500 309L1010 337 1001 560 960.500 531z" />
      <path fill="#2a4e93" d="M1018 325L1210 267 1219 274 1210.500 524.500 1001 587 1010 337z" />
      <path fill="#81531d" d="M1171 239.500L1210.500 267 1018 325 979 297.500z" />
      <path fill="#912b90" d="M979 297.500L1018 325 1010 337 969.500 309z" />
      <path fill="#912b90" d="M1001 560L1022.500 556V580L1000.500 587z" />
      <path fill="none" stroke="#4a74c4" strokeDasharray="1 1" strokeWidth=".8" d="M1022 580L1210 524.500M1010 337L1001 560" />

      <g clipPath="url(#boreClip)">
        <path fill="url(#bore)" d="M1050 360h120v130h-120z" />
        <path fill="#4a4a4a" d="M1117 360C1120 405 1097 446 1050 451V360z" />
      </g>
      {BOLT_HOLES.map(([x, y]) => (
        <g key={`${x}-${y}`} transform={`translate(${x} ${y})`}>
          <path
            fill="url(#bolt)"
            stroke="#2a3350"
            strokeWidth=".8"
            d="M5 -20C11 -20 13.500 -15 13.500 -8V0C12 11 5 20 -3 20 -10 20 -13.500 13 -13.500 4V-2C-11 -12 -4 -20 5 -20z"
          />
          <path fill="#2a4e93" stroke="#22345e" strokeWidth=".6" d="M-7 -12C-10 -8 -12 -3 -12.500 2 -9 -1 -9 -3 -8 -6z" />
        </g>
      ))}

      {/* side block */}
      <path fill="#692768" d="M900 642.500L1024.500 606.500 1127 677 999 717 897 652z" />
      <path fill="#722670" d="M897 652L999 718 1002 722V747L999 751 942 768 894 733z" />
      <path fill="#2a4e93" d="M1001 717L1135 677V704L1001 744z" />
      <path fill="#245225" d="M999 715L1130 675 1135.500 676V679L1001 719z" />
      <path fill="none" stroke="#1c1c2a" strokeWidth=".8" d="M963 624.500L1024.500 606.500 1130 675.500 999 715M1135.500 677V704M942 768L1001 750" />
      <path fill="none" stroke="#4c1c50" strokeWidth=".8" d="M897 652L999 719" />
      <path fill="none" stroke="#4a74c4" strokeDasharray="1 1" strokeWidth=".8" d="M1001 744L1135 704" />

      <ellipse cx="1162" cy="632" rx="58.500" ry="27" fill="url(#well)" stroke="#1d2740" />
      {PIN_HOLES.map(([x, y]) => (
        <ellipse key={`${x}-${y}`} cx={x} cy={y} rx="9" ry="4.500" fill="url(#pin)" stroke="#33302a" strokeWidth=".8" />
      ))}
      <ellipse cx="1302" cy="653.500" rx="12" ry="5.500" fill="url(#dowel)" stroke="#2a1c3a" strokeWidth=".8" />
      <ellipse cx="1379" cy="722.500" rx="12" ry="5.500" fill="url(#dowel)" stroke="#2a1c3a" strokeWidth=".8" />

      {/* site mark */}
      <g stroke="#4a4a4a" strokeWidth="1">
        <path fill="#8099a6" d="M1243 870L1264 884C1262 890 1263 895 1263 898L1243 885 1223 883z" />
        <path fill="#3a80a2" d="M1264 884L1279 891V931L1263 920C1266 908 1264 895 1258 880z" />
        <path fill="#6a93a8" d="M1207 890L1222 883C1230 882 1236 884 1241 888L1225 899 1207 921z" />
        <path fill="#4e86a3" d="M1207 931V917C1211 906 1216 900 1223 898V924C1223 936 1226 940 1229 944z" />
        <path fill="#2b7aa0" d="M1279 891V931L1268 938C1258 938 1250 936 1243 932L1262 922C1268 915 1270 900 1264 884z" />
        <path fill="#2579a3" d="M1223 922L1243 934C1252 939 1260 938 1267 938L1243 952 1229 944C1225 937 1223 930 1223 922z" />
        <path fill="#6b94a8" d="M1243 892L1260 902 1243 911 1227 902z" />
        <path fill="#4e86a3" d="M1227 902L1243 911V929L1227 919z" />
        <path fill="#25789f" d="M1260 902L1243 911V929L1260 919z" />
      </g>
      <g fill="#a3a4a6" className="font-bold">
        <text x="1286" y="919" className="font-['Liberation_Sans',sans-serif] text-[46px]">3D</text>
        <text x="1349" y="917" className="text-[39px]">世界网</text>
        <text x="1288" y="939" className="font-['DejaVu_Sans',sans-serif] text-[16px]">WWW.3DSJW.COM</text>
      </g>
    </svg>
  </main>
);

const App = () => (
  <div className="relative flex h-screen flex-col overflow-hidden bg-white font-['Noto_Sans','Noto_Sans_CJK_SC',sans-serif] text-xs text-[#111]">
    <Header />
    <div className="flex min-h-0 flex-1 overflow-hidden">
      <ResourceBar />
      <Navigator />
      <Viewport />
    </div>
    <Dialog />
  </div>
);

export default App;
